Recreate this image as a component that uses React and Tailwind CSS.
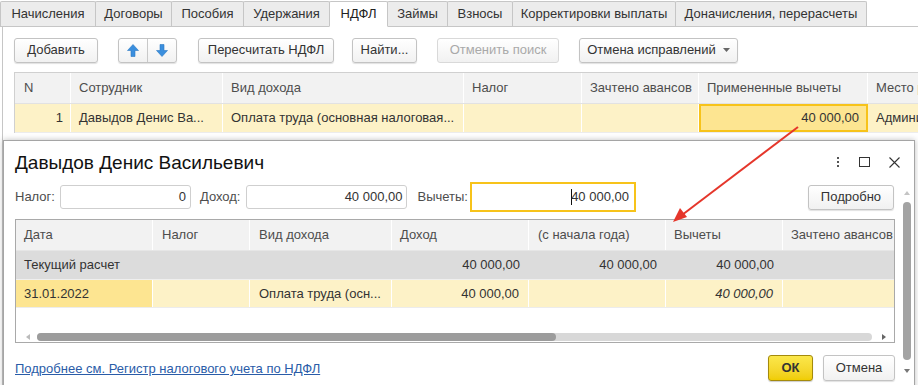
import React from 'react';

// --- вкладки и колонки ---
const tabs = [
  { name: 'Начисления', w: 96 },
  { name: 'Договоры', w: 77 },
  { name: 'Пособия', w: 73 },
  { name: 'Удержания', w: 87 },
  { name: 'НДФЛ', w: 59, active: true },
  { name: 'Займы', w: 61 },
  { name: 'Взносы', w: 66 },
  { name: 'Корректировки выплаты', w: 164 },
  { name: 'Доначисления, перерасчеты', w: 192 },
];

const Btn = ({ children, className = '', disabled }) => (
  <div
    className={`h-[25px] shrink-0 flex items-center justify-center rounded-[3px] border border-[#c3c3c3] bg-gradient-to-b from-white to-[#f1f1f1] shadow-[0_1px_1px_rgba(0,0,0,0.12)] ${disabled ? 'text-[#a9a9a9] border-[#d9d9d9] shadow-none' : 'text-[#333]'} ${className}`}
  >
    {children}
  </div>
);

const ArrowUp = () => (
  <svg width="12" height="13" viewBox="0 0 12 13">
    <path d="M6 0.5 L11.5 6.5 L8 6.5 L8 12.5 L4 12.5 L4 6.5 L0.5 6.5 Z" fill="#3b8fde" stroke="#2b78c2" strokeWidth="0.6" />
  </svg>
);

const ArrowDown = () => (
  <svg width="12" height="13" viewBox="0 0 12 13">
    <path d="M6 12.5 L11.5 6.5 L8 6.5 L8 0.5 L4 0.5 L4 6.5 L0.5 6.5 Z" fill="#3b8fde" stroke="#2b78c2" strokeWidth="0.6" />
  </svg>
);

export default function App() {
  return (
    <div
      className="relative w-[918px] h-[385px] overflow-hidden bg-white text-[13px] text-[#333]"
      style={{ fontFamily: 'Arial, "Liberation Sans", sans-serif' }}
    >
      {/* вкладки */}
      <div className="flex h-[27px] pt-[1px] border-b border-[#c6c6c6]">
        {tabs.map((t) => (
          <div
            key={t.name}
            className={`shrink-0 flex items-center justify-center border border-[#c6c6c6] -ml-px first:ml-0 rounded-t-[2px] ${t.active ? 'bg-white border-b-white -mb-px text-[#222]' : 'bg-[#ececec] border-b-0 text-[#333]'}`}
            style={{ width: t.w }}
          >
            {t.name}
          </div>
        ))}
      </div>

      {/* основная панель */}
      <div className="border-l border-[#c6c6c6] ml-[2px] h-[360px] pl-[11px]">
        {/* панель кнопок */}
        <div className="flex items-center h-[45px] pt-[1px]">
          <Btn className="w-[84px]">Добавить</Btn>
          <div className="ml-[20px] flex h-[25px] w-[59px] rounded-[3px] border border-[#c3c3c3] bg-gradient-to-b from-white to-[#f1f1f1] shadow-[0_1px_1px_rgba(0,0,0,0.12)]">
            <div className="w-[29px] flex items-center justify-center border-r border-[#c9c9c9]"><ArrowUp /></div>
            <div className="flex-1 flex items-center justify-center"><ArrowDown /></div>
          </div>
          <Btn className="ml-[21px] w-[136px]">Пересчитать НДФЛ</Btn>
          <Btn className="ml-[18px] w-[65px]">Найти...</Btn>
          <Btn disabled className="ml-[20px] w-[122px]">Отменить поиск</Btn>
          <Btn className="ml-[20px] w-[159px] gap-[7px]">
            Отмена исправлений
            <svg width="7" height="4" viewBox="0 0 7 4"><path d="M0 0 L7 0 L3.5 4 Z" fill="#666" /></svg>
          </Btn>
        </div>

        {/* таблица документа */}
        <div className="border-t border-l border-[#d0d0d0] mr-[-20px] whitespace-nowrap">
          <div className="flex h-[31px] bg-[#f2f2f2] text-[#4d4d4d] border-b border-[#e2e2e2]">
            <div className="shrink-0 w-[56px] pl-[9px] pt-[5px] border-r border-white">N</div>
            <div className="shrink-0 w-[152px] pl-[8px] pt-[5px] border-r border-white">Сотрудник</div>
            <div className="shrink-0 w-[241px] pl-[8px] pt-[5px] border-r border-white">Вид дохода</div>
            <div className="shrink-0 w-[118px] pl-[8px] pt-[5px] border-r border-white">Налог</div>
            <div className="shrink-0 w-[117px] pl-[8px] pt-[5px] border-r border-white">Зачтено авансов</div>
            <div className="shrink-0 w-[169px] pl-[8px] pt-[5px] border-r border-white">Примененные вычеты</div>
            <div className="flex-1 min-w-0 overflow-hidden pl-[8px] pt-[5px]">Место работы</div>
          </div>
          <div className="flex h-[29px] bg-[#fdf2c7] border-b border-[#ececec] items-stretch">
            <div className="shrink-0 w-[56px] pr-[7px] flex items-center justify-end border-r border-white">1</div>
            <div className="shrink-0 w-[152px] pl-[8px] flex items-center border-r border-white">Давыдов Денис Ва...</div>
            <div className="shrink-0 w-[241px] pl-[8px] flex items-center border-r border-white">Оплата труда (основная налоговая...</div>
            <div className="shrink-0 w-[118px] border-r border-white" />
            <div className="shrink-0 w-[117px] border-r border-white" />
            <div className="shrink-0 w-[169px] pr-[7px] flex items-center justify-end bg-[#fde591] border-2 border-[#f7c31a]">40 000,00</div>
            <div className="flex-1 min-w-0 overflow-hidden pl-[8px] flex items-center">Администрация</div>
          </div>
        </div>
      </div>

      {/* всплывающее окно с расшифровкой */}
      <div className="absolute left-[3px] top-[140px] w-[912px] h-[260px] bg-white border border-[#a5a5a5] shadow-[0_0_6px_rgba(0,0,0,0.25)]">
        <div className="flex items-center h-[40px] pl-[11px] pr-[14px] pt-[5px]">
          <div className="text-[19px] text-[#111] flex-1">Давыдов Денис Васильевич</div>
          <div className="flex items-center gap-[19px] text-[#444] mt-[-3px]">
            <svg width="4" height="10" viewBox="0 0 4 10">
              <rect x="1" y="0" width="2" height="2" fill="#555" />
              <rect x="1" y="4" width="2" height="2" fill="#555" />
              <rect x="1" y="8" width="2" height="2" fill="#555" />
            </svg>
            <svg width="11" height="10" viewBox="0 0 11 10"><rect x="0.5" y="0.5" width="10" height="9" fill="none" stroke="#333" strokeWidth="1" /></svg>
            <svg width="11" height="11" viewBox="0 0 11 11"><path d="M0.5 0.5 L10.5 10.5 M10.5 0.5 L0.5 10.5" stroke="#333" strokeWidth="1.1" /></svg>
          </div>
        </div>

        <div className="flex">
          <div className="w-[880px] ml-[11px]">
            {/* поля итогов */}
            <div className="flex items-center h-[32px] text-[#4d4d4d]">
              <span>Налог:</span>
              <div className="ml-[5px] w-[131px] h-[24px] border border-[#cfcfcf] rounded-[3px] flex items-center justify-end pr-[4px] text-[#333]">0</div>
              <span className="ml-[9px]">Доход:</span>
              <div className="ml-[6px] w-[161px] h-[24px] border border-[#cfcfcf] rounded-[3px] flex items-center justify-end pr-[4px] text-[#333]">40 000,00</div>
              <span className="ml-[10px]">Вычеты:</span>
              <div className="ml-[2px] w-[166px] h-[30px] border-2 border-[#f7c31a] flex items-center justify-end pr-[5px] text-[#333]">
                <span className="w-px h-[16px] bg-[#111] mr-[-1px]" />40 000,00
              </div>
              <Btn className="ml-[172px] w-[86px] h-[25px]">Подробно</Btn>
            </div>

            {/* таблица расшифровки */}
            <div className="mt-[6px] border border-[#a9a9a9] h-[124px] overflow-hidden whitespace-nowrap">
              <div className="flex h-[31px] bg-[#f2f2f2] text-[#4d4d4d] border-b border-[#e6e6e6]">
                <div className="shrink-0 w-[137px] pl-[8px] pt-[5px] border-r border-white">Дата</div>
                <div className="shrink-0 w-[97px] pl-[9px] pt-[5px] border-r border-white">Налог</div>
                <div className="shrink-0 w-[142px] pl-[9px] pt-[5px] border-r border-white">Вид дохода</div>
                <div className="shrink-0 w-[137px] pl-[8px] pt-[5px] border-r border-white">Доход</div>
                <div className="shrink-0 w-[137px] pl-[9px] pt-[5px] border-r border-white">(с начала года)</div>
                <div className="shrink-0 w-[117px] pl-[8px] pt-[5px] border-r border-white">Вычеты</div>
                <div className="flex-1 pl-[8px] pt-[5px]">Зачтено авансов</div>
              </div>
              <div className="flex h-[29px] bg-[#dcdcdc] items-center border-b border-[#efefef]">
                <div className="shrink-0 w-[376px] pl-[8px]">Текущий расчет</div>
                <div className="shrink-0 w-[137px] pr-[9px] text-right">40 000,00</div>
                <div className="shrink-0 w-[137px] pr-[9px] text-right">40 000,00</div>
                <div className="shrink-0 w-[117px] pr-[9px] text-right">40 000,00</div>
              </div>
              <div className="flex h-[28px] bg-[#fdf2c7] items-stretch border-b border-[#ececec]">
                <div className="shrink-0 w-[137px] pl-[8px] flex items-center bg-[#fde591] border-r border-white">31.01.2022</div>
                <div className="shrink-0 w-[97px] border-r border-white" />
                <div className="shrink-0 w-[142px] pl-[9px] flex items-center border-r border-white">Оплата труда (осн...</div>
                <div className="shrink-0 w-[137px] pr-[9px] flex items-center justify-end border-r border-white">40 000,00</div>
                <div className="shrink-0 w-[137px] border-r border-white" />
                <div className="shrink-0 w-[117px] pr-[9px] flex items-center justify-end italic border-r border-white">40 000,00</div>
                <div className="flex-1" />
              </div>
              {/* горизонтальная прокрутка */}
              <div className="flex items-center h-[8px] mt-[25px] pl-[10px] pr-[8px]">
                <svg width="4" height="6" viewBox="0 0 4 6"><path d="M4 0 L0 3 L4 6 Z" fill="#bbb" /></svg>
                <div className="ml-[7px] flex-1 h-[8px] rounded-full bg-[#d8d8d8] flex">
                  <div className="w-[519px] h-full rounded-full bg-[#9c9c9c]" />
                </div>
                <svg className="ml-[10px]" width="4" height="6" viewBox="0 0 4 6"><path d="M0 0 L4 3 L0 6 Z" fill="#666" /></svg>
              </div>
            </div>

            {/* ссылка и кнопки */}
            <div className="flex items-center mt-[12px] h-[26px]">
              <span className="text-[#2a5ca8] underline flex-1 pt-[2px]">Подробнее см. Регистр налогового учета по НДФЛ</span>
              <div className="w-[45px] h-[26px] flex items-center justify-center rounded-[3px] border border-[#a48a0c] bg-gradient-to-b from-[#fbe74a] to-[#f0cd00] font-bold text-[#333] shadow-[0_1px_1px_rgba(0,0,0,0.2)]">ОК</div>
              <Btn className="ml-[10px] w-[72px] h-[26px]">Отмена</Btn>
            </div>
          </div>

          {/* вертикальная прокрутка */}
          <div className="ml-[8px] w-[8px] flex flex-col items-center mt-[10px]">
            <svg width="6" height="4" viewBox="0 0 6 4"><path d="M0 4 L3 0 L6 4 Z" fill="#c4c4c4" /></svg>
            <div className="mt-[7px] w-[8px] h-[158px] rounded-full bg-[#a3a3a3]" />
            <svg className="mt-[9px]" width="6" height="4" viewBox="0 0 6 4"><path d="M0 0 L6 0 L3 4 Z" fill="#777" /></svg>
          </div>
        </div>
      </div>

      {/* красная стрелка-указатель */}
      <svg className="absolute left-0 top-0 pointer-events-none" width="918" height="385">
        <line x1="798" y1="127" x2="682" y2="215" stroke="#e5362b" strokeWidth="2" />
        <path d="M673 222 L680 208 L687 217 Z" fill="#e5362b" />
      </svg>
    </div>
  );
}
